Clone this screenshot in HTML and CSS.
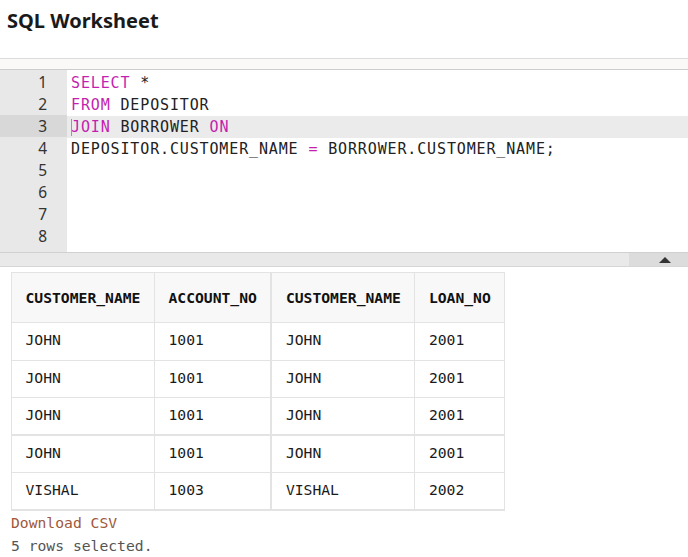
FILE: index.html
```html
<!DOCTYPE html>
<html>
<head>
<meta charset="utf-8">
<link rel="stylesheet" href="styles.css">
</head>
<body>
<header class="title">SQL Worksheet</header>
<div class="toolbar"></div>
<div class="editor">
  <div class="gutter">
    <div class="ln">1</div>
    <div class="ln">2</div>
    <div class="ln active">3</div>
    <div class="ln">4</div>
    <div class="ln">5</div>
    <div class="ln">6</div>
    <div class="ln">7</div>
    <div class="ln">8</div>
  </div>
  <div class="code">
    <div class="line"><span class="kw">SELECT</span> *</div>
    <div class="line"><span class="kw">FROM</span> DEPOSITOR</div>
    <div class="line active"><span class="cursor"></span><span class="kw">JOIN</span> BORROWER <span class="kw">ON</span></div>
    <div class="line">DEPOSITOR.CUSTOMER_NAME <span class="kw">=</span> BORROWER.CUSTOMER_NAME;</div>
    <div class="line"></div>
    <div class="line"></div>
    <div class="line"></div>
    <div class="line"></div>
  </div>
</div>
<div class="splitter">
  <div class="split-btn"><span class="tri"></span></div>
</div>
<div class="results">
  <table class="grid">
    <thead>
      <tr><th>CUSTOMER_NAME</th><th>ACCOUNT_NO</th><th class="sep">CUSTOMER_NAME</th><th>LOAN_NO</th></tr>
    </thead>
    <tbody>
      <tr><td>JOHN</td><td>1001</td><td class="sep">JOHN</td><td>2001</td></tr>
      <tr><td>JOHN</td><td>1001</td><td class="sep">JOHN</td><td>2001</td></tr>
      <tr><td>JOHN</td><td>1001</td><td class="sep">JOHN</td><td>2001</td></tr>
      <tr class="thick"><td>JOHN</td><td>1001</td><td class="sep">JOHN</td><td>2001</td></tr>
      <tr><td>VISHAL</td><td>1003</td><td class="sep">VISHAL</td><td>2002</td></tr>
    </tbody>
  </table>
  <div class="download">Download CSV</div>
  <div class="status">5 rows selected.</div>
</div>
<div class="bottom-strip"><div class="bs-left"></div><div class="bs-right"></div></div>
</body>
</html>
```
FILE: styles.css
```css
* { box-sizing: border-box; }
html, body { margin: 0; padding: 0; background: #fff; }
body { width: 688px; height: 557px; overflow: hidden; font-family: "Noto Sans", sans-serif; color: #161513; }

.title {
  height: 58px;
  padding: 8px 0 0 7px;
  font-family: "Noto Sans", sans-serif;
  font-weight: 700;
  font-size: 20px;
  line-height: 26px;
  color: #1a1a1a;
}

.toolbar {
  height: 12px;
  background: #faf9f8;
  border-top: 1px solid #dedcda;
  border-bottom: 1px solid #cfcdcb;
}

.editor {
  display: flex;
  height: 182px;
}
.gutter {
  width: 67px;
  background: #e8e8e8;
  padding-top: 1px;
}
.ln {
  height: 22px;
  line-height: 22px;
  text-align: right;
  padding-right: 20px;
  font-family: "Noto Sans", sans-serif;
  font-size: 15.5px;
  color: #333;
}
.ln.active { background: #d8d8d8; }
.code {
  flex: 1;
  padding-top: 2px;
}
.line {
  position: relative;
  height: 22px;
  line-height: 22px;
  padding-left: 4px;
  font-family: "DejaVu Sans Mono", monospace;
  font-size: 15px;
  letter-spacing: 0.86px;
  color: #222;
  white-space: pre;
}
.line.active { background: #ebebeb; }
.kw { color: #c41fae; }
.cursor {
  position: absolute;
  left: 4px;
  top: 3px;
  width: 1px;
  height: 17px;
  background: #999;
}

.splitter {
  display: flex;
  justify-content: flex-end;
  height: 15px;
  background: #e9e9e9;
  border-top: 1px solid #d0d0d0;
  border-bottom: 1px solid #d6d6d6;
}
.split-btn {
  width: 59px;
  background: #dcdcdc;
  display: flex;
  align-items: center;
  justify-content: center;
}
.tri {
  width: 0;
  height: 0;
  border-left: 6px solid transparent;
  border-right: 6px solid transparent;
  border-bottom: 6px solid #333;
  margin-left: 13px;
}

.results {
  padding: 5px 0 0 11px;
}
.grid {
  border-collapse: collapse;
  font-family: "DejaVu Sans Mono", monospace;
  font-size: 14.7px;
  border-left: 1px solid #e3e3e3;
  border-right: 1px solid #e3e3e3;
  border-bottom: 2px solid #e3e3e3;
}
.grid th {
  height: 50px;
  padding: 0 13.5px;
  text-align: left;
  font-weight: 700;
  color: #111;
  background: #f8f8f8;
  border-top: 1px solid #e3e3e3;
  border-left: 1px solid #e3e3e3;
  border-bottom: 1px solid #e3e3e3;
  white-space: nowrap;
}
.grid td {
  height: 37.6px;
  padding: 0 13.5px 3px;
  text-align: left;
  color: #1a1a1a;
  border-left: 1px solid #e3e3e3;
  border-bottom: 1px solid #e3e3e3;
  white-space: nowrap;
}
.grid .sep { border-left: 2px solid #e3e3e3; }
.grid tr.thick td { border-top: 2px solid #e3e3e3; }

.download {
  margin-top: 1px;
  font-family: "DejaVu Sans Mono", monospace;
  font-size: 14.7px;
  line-height: 22px;
  color: #a0583a;
}
.status {
  font-family: "DejaVu Sans Mono", monospace;
  font-size: 14.7px;
  line-height: 24px;
  color: #555;
}
.bottom-strip {
  display: flex;
  height: 3px;
  margin-top: 2px;
}
.bs-left { width: 283px; border-top: 1px solid #d8d8d8; }
.bs-right { flex: 1; background: #efe6dc; }
```
